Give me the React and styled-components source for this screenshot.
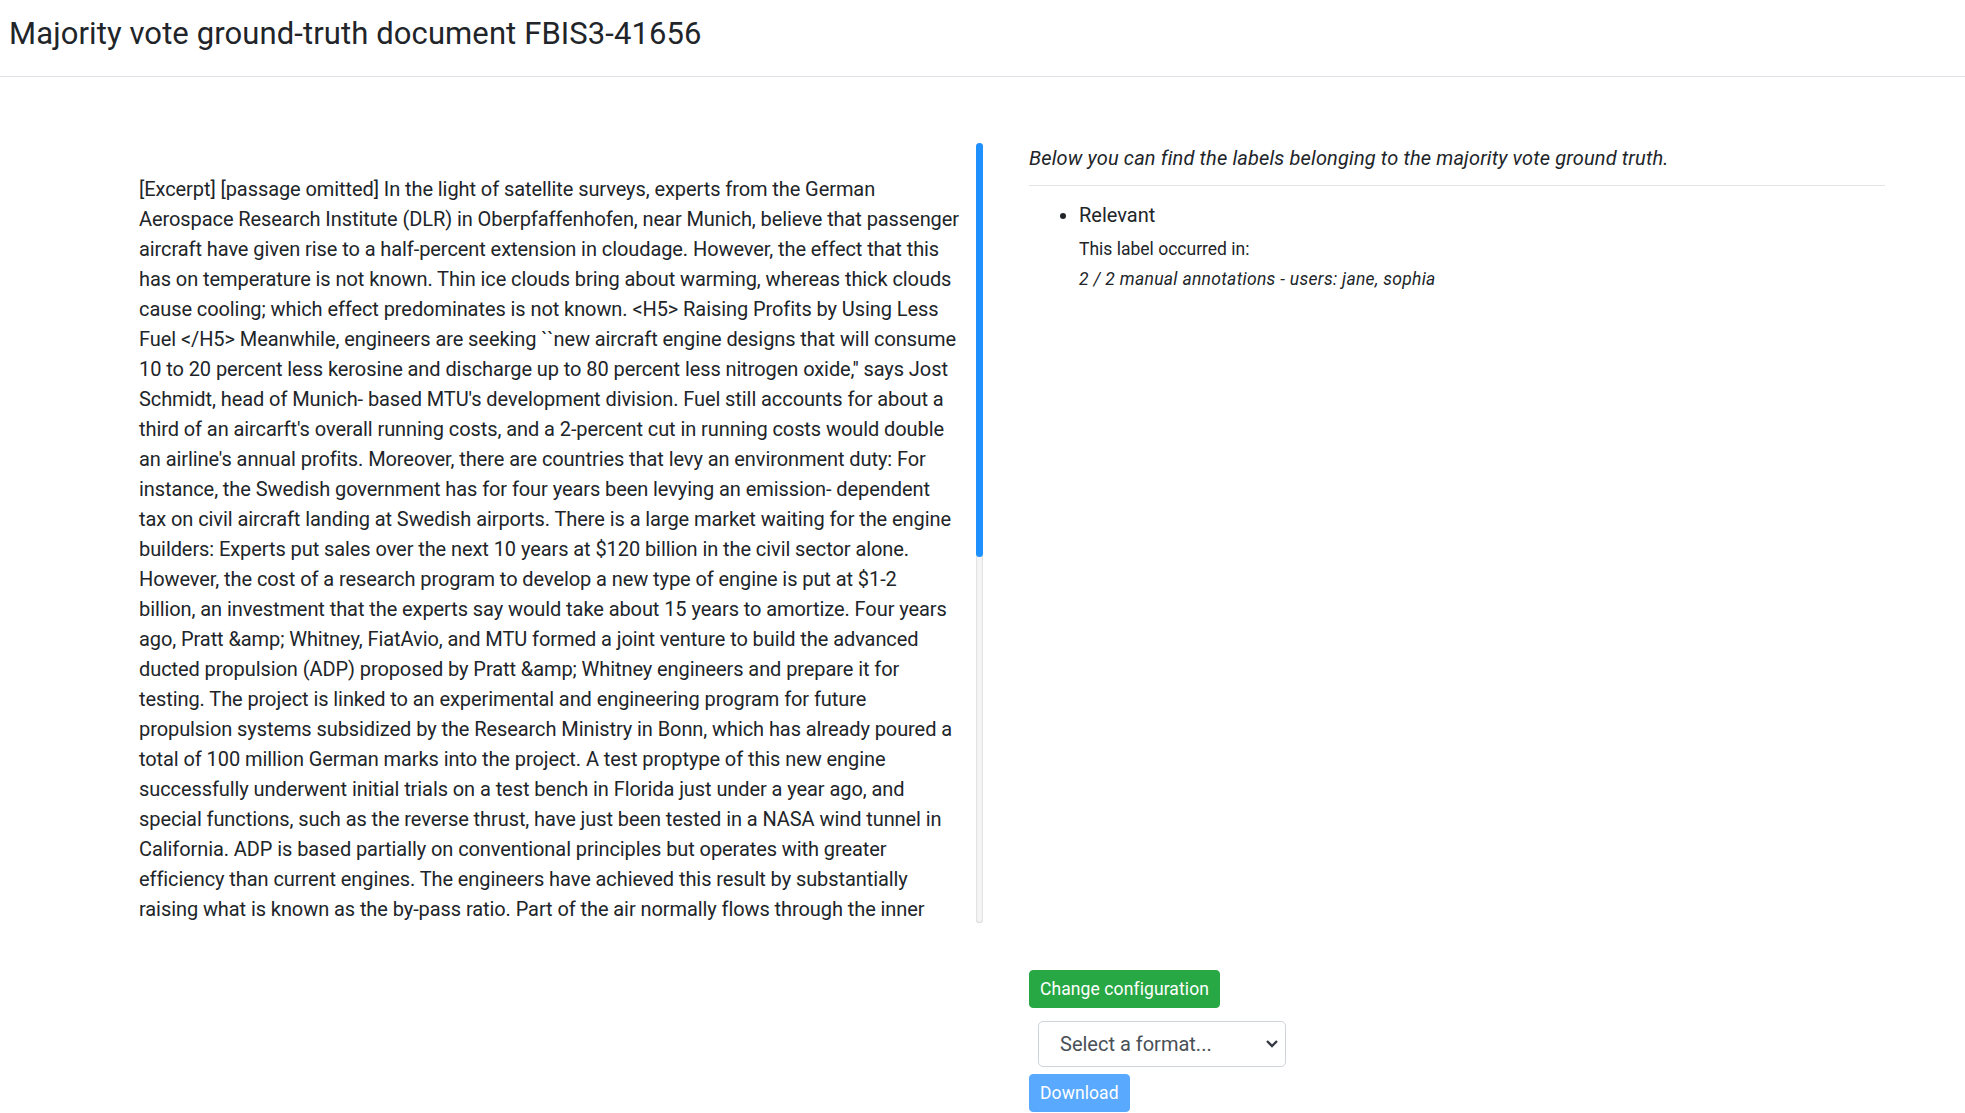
import React from "react";
import styled, { createGlobalStyle } from "styled-components";

const GlobalStyle = createGlobalStyle`
	body {
		margin: 0;
		background: #fff;
		color: #212529;
		font-family: "Segoe UI", Roboto, "Liberation Sans", sans-serif;
	}
`;

const Header = styled.header`
	padding: 16px 9px 24px;
	border-bottom: 1px solid #dee2e6;
`;

const Title = styled.h1`
	margin: 0;
	font-size: 31px;
	font-weight: 400;
	line-height: 36px;
	letter-spacing: 0.1px;
`;

const Main = styled.main`
	display: grid;
	grid-template-columns: 983px 1fr;
	row-gap: 47px;
	padding-top: 66px;
`;

// document text with its own scroll rail on the right
const DocColumn = styled.div`
	display: flex;
	height: 780px;
`;

const DocBox = styled.div`
	flex: 1;
	padding: 31px 0 0 139px;
	font-size: 20px;
	line-height: 30px;
	letter-spacing: -0.08px;
`;

const ScrollTrack = styled.div`
	width: 7px;
	border-radius: 4px;
	background: #f5f5f5;
	box-shadow: inset 0 0 2px rgba(0, 0, 0, 0.28);
`;

const ScrollThumb = styled.div`
	height: ${(p) => p.$ratio * 100}%;
	border-radius: 4px;
	background: #1e90ff;
`;

const TextLine = styled.span`
	display: block;
	white-space: nowrap;
`;

const LabelPanel = styled.section`
	padding: 0 80px 0 46px;
`;

const Intro = styled.p`
	margin: 0;
	font-size: 20px;
	line-height: 30px;
	font-style: italic;
	letter-spacing: 0.15px;
`;

const Rule = styled.hr`
	margin: 12px 0 14px;
	border: 0;
	border-top: 1px solid #e3e3e3;
`;

const LabelList = styled.ul`
	margin: 0;
	padding-left: 50px;
`;

const LabelItem = styled.li`
	font-size: 20px;
	line-height: 30px;
`;

const Detail = styled.div`
	font-size: 17.5px;
	line-height: 30px;
	font-style: ${(p) => (p.$italic ? "italic" : "normal")};
	letter-spacing: ${(p) => (p.$italic ? "0.3px" : "0")};
	margin-top: ${(p) => (p.$first ? "4px" : "0")};
`;

const Actions = styled.div`
	grid-column: 2;
	display: flex;
	flex-direction: column;
	align-items: flex-start;
	padding-left: 46px;
`;

const Button = styled.button`
	font-family: inherit;
	font-size: 17.5px;
	line-height: 26px;
	padding: 5px 10px;
	border-radius: 4px;
	color: #fff;
	letter-spacing: 0.1px;
	border: 1px solid ${(p) => (p.$variant === "success" ? "#28a745" : "#59a9ff")};
	background: ${(p) => (p.$variant === "success" ? "#28a745" : "#59a9ff")};
`;

const FormatSelect = styled.select`
	appearance: none;
	box-sizing: border-box;
	width: 248px;
	height: 46px;
	margin: 13px 0 7px 9px;
	padding: 0 36px 0 21px;
	font-family: inherit;
	font-size: 20px;
	color: #495057;
	background: #fff url("data:image/svg+xml;utf8,<svg xmlns='http://www.w3.org/2000/svg' width='14' height='10' viewBox='0 0 14 10'><polyline points='2,2 7,7 12,2' fill='none' stroke='%23343a40' stroke-width='2.4'/></svg>") no-repeat right 6px center;
	border: 1px solid #ced4da;
	border-radius: 5px;
`;

const documentLines = [
	"[Excerpt] [passage omitted] In the light of satellite surveys, experts from the German",
	"Aerospace Research Institute (DLR) in Oberpfaffenhofen, near Munich, believe that passenger",
	"aircraft have given rise to a half-percent extension in cloudage. However, the effect that this",
	"has on temperature is not known. Thin ice clouds bring about warming, whereas thick clouds",
	"cause cooling; which effect predominates is not known. <H5> Raising Profits by Using Less",
	"Fuel </H5> Meanwhile, engineers are seeking ``new aircraft engine designs that will consume",
	"10 to 20 percent less kerosine and discharge up to 80 percent less nitrogen oxide,'' says Jost",
	"Schmidt, head of Munich- based MTU's development division. Fuel still accounts for about a",
	"third of an aircarft's overall running costs, and a 2-percent cut in running costs would double",
	"an airline's annual profits. Moreover, there are countries that levy an environment duty: For",
	"instance, the Swedish government has for four years been levying an emission- dependent",
	"tax on civil aircraft landing at Swedish airports. There is a large market waiting for the engine",
	"builders: Experts put sales over the next 10 years at $120 billion in the civil sector alone.",
	"However, the cost of a research program to develop a new type of engine is put at $1-2",
	"billion, an investment that the experts say would take about 15 years to amortize. Four years",
	"ago, Pratt &amp; Whitney, FiatAvio, and MTU formed a joint venture to build the advanced",
	"ducted propulsion (ADP) proposed by Pratt &amp; Whitney engineers and prepare it for",
	"testing. The project is linked to an experimental and engineering program for future",
	"propulsion systems subsidized by the Research Ministry in Bonn, which has already poured a",
	"total of 100 million German marks into the project. A test proptype of this new engine",
	"successfully underwent initial trials on a test bench in Florida just under a year ago, and",
	"special functions, such as the reverse thrust, have just been tested in a NASA wind tunnel in",
	"California. ADP is based partially on conventional principles but operates with greater",
	"efficiency than current engines. The engineers have achieved this result by substantially",
	"raising what is known as the by-pass ratio. Part of the air normally flows through the inner",
];

export default function App() {
	return (
		<>
			<GlobalStyle />
			<Header>
				<Title>Majority vote ground-truth document FBIS3-41656</Title>
			</Header>
			<Main>
				<DocColumn>
					<DocBox>
						{documentLines.map((line, i) => (
							<TextLine key={i}>{line}</TextLine>
						))}
					</DocBox>
					<ScrollTrack>
						<ScrollThumb $ratio={0.531} />
					</ScrollTrack>
				</DocColumn>
				<LabelPanel>
					<Intro>Below you can find the labels belonging to the majority vote ground truth.</Intro>
					<Rule />
					<LabelList>
						<LabelItem>
							Relevant
							<Detail $first>This label occurred in:</Detail>
							<Detail $italic>2 / 2 manual annotations - users: jane, sophia</Detail>
						</LabelItem>
					</LabelList>
				</LabelPanel>
				<Actions>
					<Button $variant="success">Change configuration</Button>
					<FormatSelect defaultValue="">
						<option value="" disabled>Select a format...</option>
						<option value="json">JSON</option>
						<option value="csv">CSV</option>
					</FormatSelect>
					<Button $variant="primary" disabled>Download</Button>
				</Actions>
			</Main>
		</>
	);
}
